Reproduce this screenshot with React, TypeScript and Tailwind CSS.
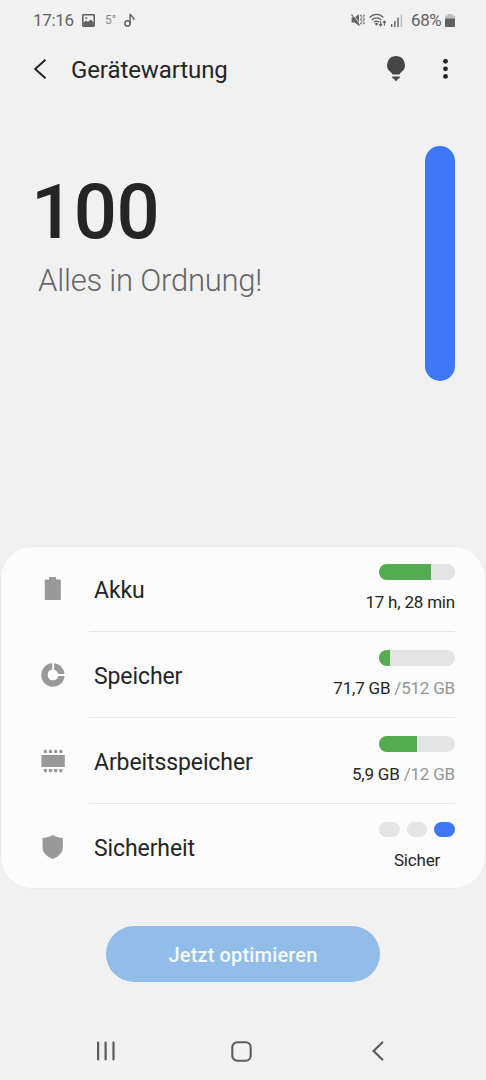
import type { ReactNode } from "react";

type Row = {
  label: string;
  icon: ReactNode;
  meter: ReactNode;
};

function StatusBar() {
  return (
    <div className="flex h-10 items-center justify-between pl-[33px] pr-[31px] text-[#626262]">
      <div className="flex items-center">
        <span className="w-[49px] whitespace-nowrap text-[17px] leading-5 tracking-[-0.3px]">17:16</span>
        <svg className="h-[13px] w-[13px]" viewBox="0 0 13 13" fill="none">
          <rect x="0.8" y="0.8" width="11.4" height="11.4" rx="0.6" stroke="currentColor" strokeWidth="1.6" />
          <path d="M1.5 8.6 4 6.4l2 1.6 2.6-2.6 3.1 3V12H1.5z" fill="currentColor" />
          <circle cx="4.3" cy="3.9" r="1" fill="currentColor" />
        </svg>
        <span className="ml-[10px] w-[19px] text-[12px] leading-5 text-[#8c8c8c]">5°</span>
        <svg className="h-[14px] w-[11px]" viewBox="0 0 11 14" fill="none" stroke="currentColor" strokeWidth="1.5">
          <circle cx="3.5" cy="10.4" r="2.6" />
          <path d="M6.1 10.6V.8c0 2.600 4.300 2.300 3.600 6.200" />
        </svg>
      </div>
      <div className="flex items-center">
        {/* stumm / vibrieren */}
        <svg className="h-[14px] w-[14px]" viewBox="0 0 14 14" fill="none" stroke="currentColor">
          <path d="M.6 4.500h3L8 1.200v11.600L3.600 9.600h-3z" fill="currentColor" stroke="none" />
          <path d="M1.500 1 9.300 11.500" stroke="#f1f1f1" strokeWidth="0.9" />
          <path d="M.5 1.500 8.600 12.500" strokeWidth="1.2" />
          <path d="M9.900 1.800v1.800M9.900 5.600v1.800M9.900 9.400v1.800M13 1.800v1.800M13 5.600v1.800M13 9.400v1.800" strokeWidth="1.3" />
          <path d="M10.700 3.400v2.400M10.700 7.200v2.400M12.200 3.400v2.400M12.200 7.200v2.400" strokeWidth="0.6" />
        </svg>
        <svg className="ml-[4px] h-[14px] w-[18px]" viewBox="0 0 18 14" fill="none" stroke="currentColor" strokeWidth="1.3">
          <path d="M.7 4.500c3.800-4.300 9.900-4.300 13.700 0M2.900 7c2.600-2.900 6.700-2.900 9.300 0M5 9.300c1.400-1.500 3.700-1.500 5.100 0" />
          <path d="m5.800 10.800 1.700-1.200 1.700 1.200-1.700 1.900z" fill="currentColor" stroke="none" />
          <path d="M11.700 8v4.800M10.100 11.100l1.600 1.700 1.400-1.700M15.400 12.800V8M13.900 9.700 15.400 8l1.600 1.700" strokeWidth="1.1" />
        </svg>
        <svg className="ml-[4px] h-[13px] w-[12px]" viewBox="0 0 12 13" fill="currentColor">
          <rect x="0" y="10" width="1.400" height="3" />
          <rect x="3.100" y="7" width="1.400" height="6" />
          <rect x="6.300" y="3.600" width="1.400" height="9.400" />
          <rect x="9.700" y="0.500" width="1.400" height="12.500" opacity="0.35" />
        </svg>
        <span className="ml-[8px] w-[34px] whitespace-nowrap text-[17px] leading-5 tracking-[-0.400px]">68%</span>
        <svg className="h-[13px] w-[10px]" viewBox="0 0 10 13" fill="currentColor">
          <path d="M2.400 0h5v1.400h1.800q.8 0 .8.8V5H0V2.200q0-.8.8-.8h1.600z" opacity="0.35" />
          <path d="M0 4.600h10v7.600q0 .8-.8.8H.8Q0 13 0 12.200z" />
        </svg>
      </div>
    </div>
  );
}

function TopBar() {
  return (
    <header className="flex h-[58px] items-center pl-[33px] pr-[38px] text-[#252525]">
      <button type="button" aria-label="Zurück">
        <svg className="h-5 w-[14px]" viewBox="0 0 14 20" fill="none" stroke="currentColor" strokeWidth="2">
          <path d="M12.5.7 2.200 10l10.300 9.300" />
        </svg>
      </button>
      <h1 className="ml-[24px] flex-1 whitespace-nowrap pt-[2px] text-[24px] leading-8 tracking-[-0.100px]">
        Gerätewartung
      </h1>
      <button type="button" aria-label="Tipps">
        <svg className="h-[26px] w-[18px]" viewBox="0 0 18 26" fill="#454545">
          <path d="M9 .1a8.900 8.900 0 0 0-5.200 16.100c.9.7 1.400 1.300 1.600 2.400h7.200c.2-1.100.7-1.700 1.600-2.400A8.900 8.900 0 0 0 9 .1z" />
          <path d="M5.200 20.600h7.600v.7c0 .8-.5 1.200-1.200 1.400h-.7c-.3.900-.9 1.600-1.900 2.500-1-.9-1.600-1.600-1.900-2.500h-.7c-.7-.2-1.200-.6-1.200-1.400z" />
        </svg>
      </button>
      <button type="button" aria-label="Weitere Optionen" className="ml-[38px]">
        <svg className="h-5 w-[5px]" viewBox="0 0 5 20" fill="currentColor">
          <circle cx="2.500" cy="2.300" r="2.400" />
          <circle cx="2.500" cy="9.800" r="2.400" />
          <circle cx="2.500" cy="17.400" r="2.400" />
        </svg>
      </button>
    </header>
  );
}

function Bar({ percent }: { percent: number }) {
  return (
    <div className="h-4 w-[76px] overflow-hidden rounded-full bg-[#e4e4e4]">
      <div className="h-full bg-[#55ab50]" style={{ width: `${percent}%` }} />
    </div>
  );
}

function Usage({ percent, value, total }: { percent: number; value: string; total?: string }) {
  return (
    <div className="flex flex-col items-end">
      <Bar percent={percent} />
      <p className="mt-[12px] whitespace-nowrap text-[17px] leading-5 tracking-[-0.2px]">
        {value}
        {total && <span className="text-[#949494]"> /{total}</span>}
      </p>
    </div>
  );
}

function Security() {
  return (
    <div className="flex flex-col items-center">
      <div className="grid w-[76px] grid-cols-3 gap-[7px]">
        <span className="h-[15px] rounded-full bg-[#e4e4e4]" />
        <span className="h-[15px] rounded-full bg-[#e4e4e4]" />
        <span className="h-[15px] rounded-full bg-[#3e78f6]" />
      </div>
      <p className="mt-[13px] text-[17px] leading-5 tracking-[-0.2px]">Sicher</p>
    </div>
  );
}

const rows: Row[] = [
  {
    label: "Akku",
    icon: <path d="M8 .6Q8 0 8.600 0h5.800q.6 0 .6.6v1.900h4q.8 0 .8.8v18.900q0 .8-.8.8H4.600q-.8 0-.8-.8V3.300q0-.8.8-.8H8z" />,
    meter: <Usage percent={68} value="17 h, 28 min" />,
  },
  {
    label: "Speicher",
    icon: (
      <>
        <path d="M11.200.3v6.400A5.300 5.300 0 1 0 17.200 12.900h6.400A11.700 11.700 0 1 1 11.200.3z" />
        <path d="M13.100.3a11.700 11.700 0 0 1 10.500 10.600h-6.400a5.300 5.300 0 0 0-4.100-4.200z" />
      </>
    ),
    meter: <Usage percent={15} value="71,7 GB" total="512 GB" />,
  },
  {
    label: "Arbeitsspeicher",
    icon: (
      <>
        <rect x="0.400" y="6" width="23.400" height="12" />
        {[2.8, 7.9, 13.1, 18.3].map((x) => (
          <g key={x}>
            <path d={`M${x} 3.900V2.200a1.600 1.600 0 0 1 3.200 0v1.700z`} />
            <path d={`M${x} 20.100v1.700a1.600 1.600 0 0 0 3.200 0v-1.700z`} />
          </g>
        ))}
      </>
    ),
    meter: <Usage percent={49.5} value="5,9 GB" total="12 GB" />,
  },
  {
    label: "Sicherheit",
    icon: <path d="M11.700 0C8.500 1.800 5.300 2.800 1.500 2.900V12c0 5.700 4.400 9.900 10.200 12 5.800-2.100 10.200-6.300 10.200-12V2.900C18.100 2.800 14.900 1.800 11.700 0z" />,
    meter: <Security />,
  },
];

function NavBar() {
  return (
    <nav className="flex h-[58px] items-center pl-[96px] text-[#5c5c5c]">
      <svg className="h-5 w-5" viewBox="0 0 20 20" stroke="currentColor" strokeWidth="2.200" strokeLinecap="round">
        <path d="M2.100 1.500v17M9.600 1.500v17M17.500 1.500v17" />
      </svg>
      <svg className="ml-[115px] h-[21px] w-[21px]" viewBox="0 0 21 21" fill="none" stroke="currentColor" strokeWidth="2.100">
        <rect x="1.300" y="1.300" width="18.400" height="18.400" rx="5" />
      </svg>
      <svg className="ml-[120px] h-5 w-3" viewBox="0 0 12 20" fill="none" stroke="currentColor" strokeWidth="2.200" strokeLinecap="round">
        <path d="M10.300 1.500 1.600 10l8.700 8.500" />
      </svg>
    </nav>
  );
}

export default function App() {
  return (
    <div className="flex h-[1080px] w-[486px] flex-col bg-[#f1f1f1] font-['Roboto',sans-serif] text-[#252525]">
      <StatusBar />
      <TopBar />

      <section className="flex h-[448px] items-start justify-between pl-[31px] pr-[31px] pt-[48px]">
        <div className="pt-[26px]">
          <p className="text-[76px] font-medium leading-[80px] tracking-[-0.5px]">100</p>
          <p className="ml-[7px] mt-[9px] whitespace-nowrap text-[31px] font-light leading-[40px] tracking-[-0.22px] text-[#666]">
            Alles in Ordnung!
          </p>
        </div>
        <div className="h-[235px] w-[30px] rounded-full bg-[#3e78f6]" />
      </section>

      <main className="flex h-[343px] flex-col rounded-[32px] bg-[#fcfcfc] ring-1 ring-inset ring-[#ebebeb]">
        {rows.map((row) => (
          <div key={row.label} className="group flex h-[86px] shrink-0 pl-[41px] pr-[31px]">
            <svg className="mt-[31px] h-6 w-6 shrink-0" viewBox="0 0 24 24" fill="#999">
              {row.icon}
            </svg>
            <div className="ml-[24px] flex flex-1 justify-between border-b border-[#e6e6e6] pl-[5px] pt-[18px] group-last:border-0">
              <span className="mt-[13px] whitespace-nowrap text-[23px] leading-7 tracking-[-0.1px]">{row.label}</span>
              {row.meter}
            </div>
          </div>
        ))}
      </main>

      <button
        type="button"
        className="mx-auto mt-[37px] h-[56px] w-[274px] shrink-0 rounded-full bg-[#92bde9] pt-[2px] text-[20px] font-medium tracking-[0.15px] text-[#f5faff]"
      >
        Jetzt optimieren
      </button>

      <div className="mt-auto">
        <NavBar />
      </div>
    </div>
  );
}
